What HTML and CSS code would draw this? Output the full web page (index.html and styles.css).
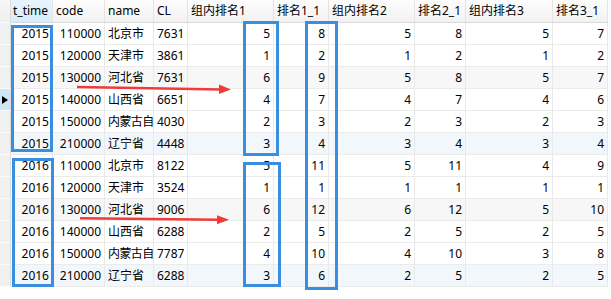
FILE: index.html
```html
<!DOCTYPE html>
<html lang="zh">
<head>
<meta charset="utf-8">
<link rel="stylesheet" href="styles.css">
</head>
<body>
<div class="page">
  <div class="grid">
    <div class="row head">
      <div class="c ind"></div>
      <div class="c sel">t_time</div>
      <div class="c">code</div>
      <div class="c">name</div>
      <div class="c">CL</div>
      <div class="c">组内排名1</div>
      <div class="c">排名1_1</div>
      <div class="c">组内排名2</div>
      <div class="c">排名2_1</div>
      <div class="c">组内排名3</div>
      <div class="c">排名3_1</div>
    </div>

    <div class="row"><div class="c ind"></div><div class="c n">2015</div><div class="c n">110000</div><div class="c t">北京市</div><div class="c n">7631</div><div class="c n">5</div><div class="c n">8</div><div class="c n">5</div><div class="c n">8</div><div class="c n">5</div><div class="c n">7</div></div>
    <div class="row"><div class="c ind"></div><div class="c n">2015</div><div class="c n">120000</div><div class="c t">天津市</div><div class="c n">3861</div><div class="c n">1</div><div class="c n">2</div><div class="c n">1</div><div class="c n">2</div><div class="c n">1</div><div class="c n">2</div></div>
    <div class="row grey"><div class="c ind"></div><div class="c n">2015</div><div class="c n">130000</div><div class="c t">河北省</div><div class="c n">7631</div><div class="c n">6</div><div class="c n">9</div><div class="c n">5</div><div class="c n">8</div><div class="c n">5</div><div class="c n">7</div></div>
    <div class="row"><div class="c ind cur"><span class="tri"></span></div><div class="c n">2015</div><div class="c n">140000</div><div class="c t">山西省</div><div class="c n">6651</div><div class="c n">4</div><div class="c n">7</div><div class="c n">4</div><div class="c n">7</div><div class="c n">4</div><div class="c n">6</div></div>
    <div class="row"><div class="c ind"></div><div class="c n">2015</div><div class="c n">150000</div><div class="c t tight">内蒙古自</div><div class="c n">4030</div><div class="c n">2</div><div class="c n">3</div><div class="c n">2</div><div class="c n">3</div><div class="c n">2</div><div class="c n">3</div></div>
    <div class="row blue"><div class="c ind"></div><div class="c n">2015</div><div class="c n">210000</div><div class="c t">辽宁省</div><div class="c n">4448</div><div class="c n">3</div><div class="c n">4</div><div class="c n">3</div><div class="c n">4</div><div class="c n">3</div><div class="c n">4</div></div>

    <div class="row"><div class="c ind"></div><div class="c n">2016</div><div class="c n">110000</div><div class="c t">北京市</div><div class="c n">8122</div><div class="c n">5</div><div class="c n">11</div><div class="c n">5</div><div class="c n">11</div><div class="c n">4</div><div class="c n">9</div></div>
    <div class="row"><div class="c ind"></div><div class="c n">2016</div><div class="c n">120000</div><div class="c t">天津市</div><div class="c n">3524</div><div class="c n">1</div><div class="c n">1</div><div class="c n">1</div><div class="c n">1</div><div class="c n">1</div><div class="c n">1</div></div>
    <div class="row grey"><div class="c ind"></div><div class="c n">2016</div><div class="c n">130000</div><div class="c t">河北省</div><div class="c n">9006</div><div class="c n">6</div><div class="c n">12</div><div class="c n">6</div><div class="c n">12</div><div class="c n">5</div><div class="c n">10</div></div>
    <div class="row"><div class="c ind"></div><div class="c n">2016</div><div class="c n">140000</div><div class="c t">山西省</div><div class="c n">6288</div><div class="c n">2</div><div class="c n">5</div><div class="c n">2</div><div class="c n">5</div><div class="c n">2</div><div class="c n">5</div></div>
    <div class="row"><div class="c ind"></div><div class="c n">2016</div><div class="c n">150000</div><div class="c t tight">内蒙古自</div><div class="c n">7787</div><div class="c n">4</div><div class="c n">10</div><div class="c n">4</div><div class="c n">10</div><div class="c n">3</div><div class="c n">8</div></div>
    <div class="row blue"><div class="c ind"></div><div class="c n">2016</div><div class="c n">210000</div><div class="c t">辽宁省</div><div class="c n">6288</div><div class="c n">3</div><div class="c n">6</div><div class="c n">2</div><div class="c n">5</div><div class="c n">2</div><div class="c n">5</div></div>
  </div>

  <div class="box b1"></div>
  <div class="box b2"></div>
  <div class="box b3"></div>
  <div class="box b4"></div>
  <div class="box b5"></div>

  <svg class="arrows" width="611" height="299" viewBox="0 0 611 299">
    <line x1="77" y1="87" x2="221" y2="89.5" stroke="#f03b3b" stroke-width="2.4"/>
    <polygon points="219,84.5 231,89.5 219,94" fill="#f03b3b"/>
    <line x1="80" y1="218.3" x2="219" y2="219.8" stroke="#f03b3b" stroke-width="2.4"/>
    <polygon points="217,215.3 229,219.8 217,224.3" fill="#f03b3b"/>
  </svg>
</div>
</body>
</html>
```

FILE: styles.css
```css
html, body {
  margin: 0;
  padding: 0;
  background: #ffffff;
}

.page {
  position: relative;
  width: 611px;
  height: 299px;
  overflow: hidden;
  font-family: "Noto Sans", "Noto Sans CJK SC", sans-serif;
  font-size: 12px;
  color: #000;
}

.grid {
  display: flex;
  flex-direction: column;
  width: 608px;
}

.row {
  display: grid;
  grid-template-columns: 11px 42px 52px 49px 34px 86px 55px 86px 51px 87px 55px;
  height: 22px;
  background: #ffffff;
}

.row.grey { background: #f7f7f7; }
.row.blue { background: #f2f7fc; }

.c {
  box-sizing: border-box;
  border-right: 1px solid #e9e9e9;
  border-bottom: 1px solid #ebebeb;
  white-space: nowrap;
  overflow: hidden;
  line-height: 21px;
  padding: 0 3px;
}

.c.n { text-align: right; padding-right: 3px; }
.c.t { text-align: left; padding-left: 3px; }
.c.t.tight { letter-spacing: -0.6px; padding-left: 3px; padding-right: 0; }

.head {
  height: 23px;
  background: linear-gradient(#fdfdfd, #f1f1f1);
}

.head .c {
  line-height: 22px;
  border-bottom: 1px solid #d9d9d9;
  border-right: 1px solid #e4e4e4;
  padding-left: 3px;
}

.head .c.sel {
  background: linear-gradient(#e8f4fd, #d7ecfb);
  padding-left: 2px;
}

.c.ind {
  padding: 0;
  background: #f0f0f0;
  border-right: 1px solid #dcdcdc;
  border-bottom: 1px solid #fbfbfb;
  display: flex;
  align-items: center;
  justify-content: flex-start;
}

.head .c.ind {
  background: linear-gradient(#f7f7f7, #efefef);
  padding: 0;
}

.c.ind.cur {
  background: #cfe6f8;
}

.tri {
  display: block;
  width: 0;
  height: 0;
  margin-left: 2px;
  border-left: 6px solid #000;
  border-top: 4.5px solid transparent;
  border-bottom: 4.5px solid transparent;
}

.box {
  position: absolute;
  box-sizing: border-box;
  border: 3px solid #3a8ee0;
}

.b1 { left: 11px; top: 25px; width: 42px; height: 127px; }
.b2 { left: 12px; top: 158px; width: 42px; height: 129px; }
.b3 { left: 243px; top: 21px; width: 36px; height: 135px; }
.b4 { left: 243px; top: 162px; width: 38px; height: 125px; }
.b5 { left: 305px; top: 21px; width: 33px; height: 269px; }

.arrows {
  position: absolute;
  left: 0;
  top: 0;
  pointer-events: none;
}
```
